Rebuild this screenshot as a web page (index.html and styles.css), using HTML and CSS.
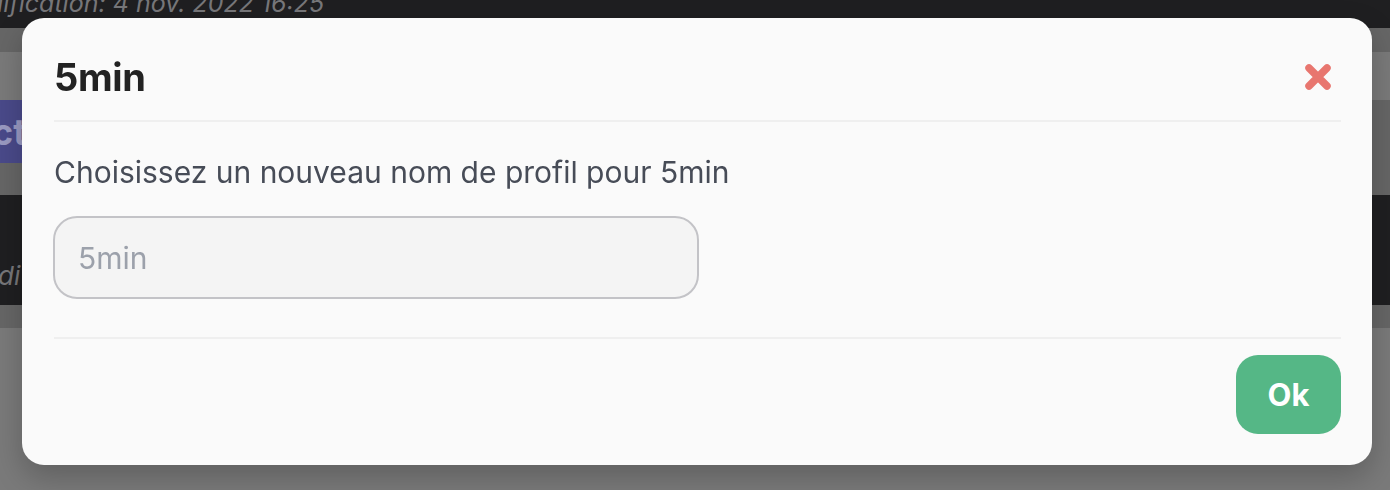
FILE: index.html
```html
<!DOCTYPE html>
<html lang="fr">
<head>
<meta charset="utf-8">
<title>5min</title>
<link rel="stylesheet" href="styles.css">
</head>
<body>
<div class="page">
  <div class="topbar"><span class="meta">dification: 4 nov. 2022 16:25</span></div>
  <div class="band band-a"></div>
  <div class="band band-b"></div>
  <div class="band band-c"><span class="action">ct</span></div>
  <div class="band band-d"></div>
  <div class="band band-e"><span class="meta2">di</span></div>
  <div class="band band-f"></div>
</div>

<div class="overlay">
  <div class="modal" role="dialog" aria-labelledby="modal-title">
    <div class="modal-header">
      <h2 id="modal-title" class="modal-title">5min</h2>
      <button class="close" type="button" aria-label="Fermer">
        <svg width="30" height="30" viewBox="0 0 30 30" aria-hidden="true">
          <path d="M6 6 L24 24 M24 6 L6 24" stroke="#e8766f" stroke-width="7.5" stroke-linecap="round" fill="none"/>
        </svg>
      </button>
    </div>
    <div class="modal-body">
      <p class="prompt">Choisissez un nouveau nom de profil pour 5min</p>
      <input class="field" type="text" placeholder="5min">
    </div>
    <div class="modal-footer">
      <button class="btn-ok" type="button">Ok</button>
    </div>
  </div>
</div>
</body>
</html>
```

FILE: styles.css
```css
* { box-sizing: border-box; }

html, body {
  margin: 0;
  padding: 0;
  height: 100%;
}

body {
  background: #7a7a7a;
  font-family: Inter, "Noto Sans", "Liberation Sans", sans-serif;
  overflow: hidden;
}

.page {
  display: flex;
  flex-direction: column;
}

.topbar {
  height: 28px;
  background: #1f1f21;
  overflow: hidden;
  white-space: nowrap;
}

.meta {
  display: block;
  margin-top: -13px;
  margin-left: -12px;
  font-size: 25px;
  line-height: 32px;
  font-style: italic;
  color: #77777a;
}

.band { overflow: hidden; white-space: nowrap; }
.band-a { height: 24px; background: #666666; }
.band-b { height: 48px; background: #7a7a7a; }
.band-c {
  height: 63px;
  background: linear-gradient(to right, #4a4a8a 0, #4a4a8a 30px, #666666 30px);
  display: flex;
  align-items: center;
}
.band-d { height: 32px; background: #666666; }
.band-e {
  height: 110px;
  background: #1f1f21;
  display: flex;
  align-items: flex-end;
  padding-bottom: 14px;
}
.band-f { height: 23px; background: #666666; }

.action {
  margin-left: -8px;
  font-size: 36px;
  font-weight: 700;
  color: #9a9ac2;
}

.meta2 {
  margin-left: -2px;
  font-size: 26px;
  font-style: italic;
  color: #77777a;
}

.overlay {
  position: fixed;
  inset: 0;
  padding: 18px 18px 0 22px;
}

.modal {
  width: 1350px;
  height: 447px;
  background: #fafafa;
  border-radius: 22px;
  box-shadow: 0 12px 30px rgba(0, 0, 0, 0.22);
  padding: 0 31px 0 32px;
  display: flex;
  flex-direction: column;
}

.modal-header {
  height: 104px;
  display: flex;
  align-items: center;
  justify-content: space-between;
  border-bottom: 2px solid #efefef;
  padding-top: 16px;
}

.modal-title {
  margin: 0;
  font-size: 38px;
  font-weight: 700;
  color: #222222;
  letter-spacing: -0.3px;
}

.close {
  border: 0;
  background: none;
  padding: 0;
  margin-right: 8px;
  width: 30px;
  height: 30px;
  display: flex;
}

.modal-body {
  padding: 32px 0 38px;
  border-bottom: 2px solid #efefef;
}

.prompt {
  margin: 0 0 26px;
  font-size: 30px;
  line-height: 36px;
  color: #474c57;
}

.field {
  display: block;
  width: 646px;
  height: 83px;
  margin-left: -1px;
  border: 2px solid #c3c3c7;
  border-radius: 24px;
  background: #f4f4f4;
  padding: 0 23px;
  font-family: inherit;
  font-size: 30px;
  color: #333;
  outline: none;
}

.field::placeholder { color: #9ca1ab; }

.modal-footer {
  display: flex;
  justify-content: flex-end;
  padding-top: 16px;
}

.btn-ok {
  width: 105px;
  height: 79px;
  border: 0;
  border-radius: 22px;
  background: #55b786;
  color: #ffffff;
  font-family: inherit;
  font-size: 31px;
  font-weight: 700;
}
```
